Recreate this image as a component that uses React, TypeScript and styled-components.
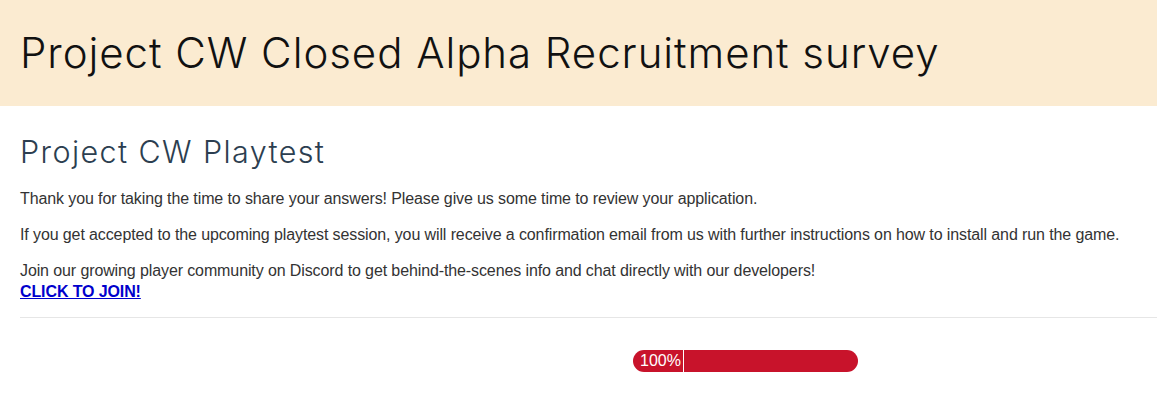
import React from "react";
import styled, { createGlobalStyle } from "styled-components";

const GlobalStyle = createGlobalStyle`
  html, body {
    margin: 0;
    padding: 0;
    background: #ffffff;
  }
  body {
    font-family: "Liberation Sans", Arial, sans-serif;
  }
`;

const Page = styled.div`
  width: 1157px;
  height: 406px;
  overflow: hidden;
  background: #ffffff;
`;

const Banner = styled.header`
  background: #fbebd1;
  height: 106px;
  padding: 0 20px;
  box-sizing: border-box;
  display: flex;
  align-items: center;
`;

const Title = styled.h1`
  margin: 0;
  font-family: Inter, "Noto Sans", sans-serif;
  font-weight: 300;
  font-size: 42px;
  letter-spacing: 0.95px;
  color: #111111;
  line-height: 1;
`;

const Content = styled.main`
  padding: 0 0 0 20px;
`;

const Subtitle = styled.h2`
  margin: 28px 0 17px;
  font-family: Inter, "Noto Sans", sans-serif;
  font-weight: 300;
  font-size: 30.5px;
  letter-spacing: 1.4px;
  line-height: 1.2;
  color: #2c3e50;
`;

const Para = styled.p`
  margin: 0 0 15px;
  font-size: 16px;
  line-height: 21px;
  letter-spacing: -0.11px;
  color: #333333;
`;

const JoinLink = styled.a`
  font-weight: bold;
  color: #0000cc;
  text-decoration: underline;
`;

const Divider = styled.hr`
  border: none;
  border-top: 1px solid #e6e6e6;
  margin: 11px 0 0;
`;

const Footer = styled.div`
  display: flex;
  padding: 32px 0 0 613px;
`;

const Progress = styled.div`
  width: 225px;
  height: 22px;
  border-radius: 11px;
  background: #c8132b;
  display: flex;
  align-items: center;
  overflow: hidden;
`;

const ProgressLabel = styled.span`
  width: 51px;
  height: 100%;
  box-sizing: border-box;
  padding-left: 7px;
  border-right: 1px solid #ffffff;
  color: #ffffff;
  font-size: 16px;
  line-height: 22px;
`;

export default function App() {
  return (
    <Page>
      <GlobalStyle />
      <Banner>
        <Title>Project CW Closed Alpha Recruitment survey</Title>
      </Banner>
      <Content>
        <Subtitle>Project CW Playtest</Subtitle>
        <Para>
          Thank you for taking the time to share your answers! Please give us some time to review your application.
        </Para>
        <Para>
          If you get accepted to the upcoming playtest session, you will receive a confirmation email from us with further instructions on how to install and run the game.
        </Para>
        <Para>
          Join our growing player community on Discord to get behind-the-scenes info and chat directly with our developers!
          <br />
          <JoinLink href="#">CLICK TO JOIN!</JoinLink>
        </Para>
        <Divider />
        <Footer>
          <Progress>
            <ProgressLabel>100%</ProgressLabel>
          </Progress>
        </Footer>
      </Content>
    </Page>
  );
}
